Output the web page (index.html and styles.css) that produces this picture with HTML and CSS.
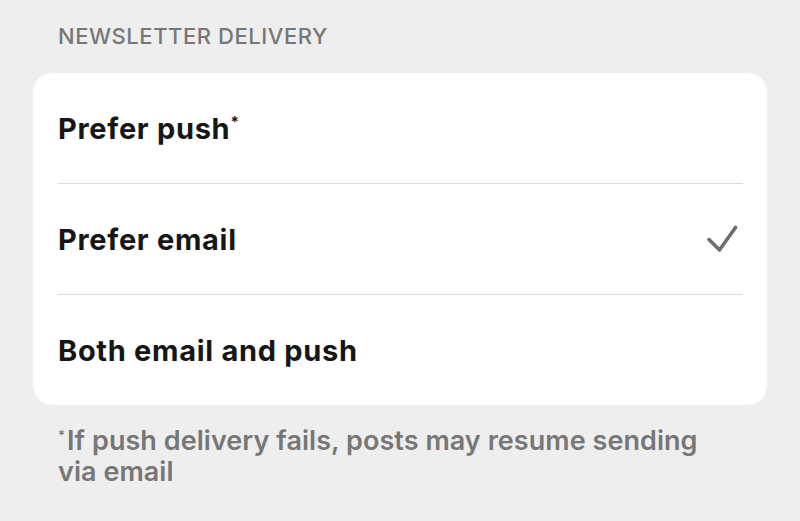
FILE: index.html
```html
<!DOCTYPE html>
<html>
<head>
<meta charset="utf-8">
<link rel="stylesheet" href="styles.css">
</head>
<body>
<div class="page">
  <div class="section-title">NEWSLETTER DELIVERY</div>
  <div class="card">
    <div class="row"><span class="label">Prefer push<span class="ast">*</span></span></div>
    <div class="sep"></div>
    <div class="row"><span class="label">Prefer email</span>
      <svg class="check" width="32" height="30" viewBox="0 0 32 30"><path d="M3 15.5 L13.5 26 L29.5 3.5" fill="none" stroke="#6e6e6e" stroke-width="3.6" stroke-linecap="round" stroke-linejoin="round"/></svg>
    </div>
    <div class="sep"></div>
    <div class="row"><span class="label">Both email and push</span></div>
  </div>
  <div class="footnote"><span class="fast">*</span>If push delivery fails, posts may resume sending via email</div>
</div>
</body>
</html>
```
FILE: styles.css
```css
html, body { margin: 0; padding: 0; }
body { background: #eeeeee; font-family: Inter, "Noto Sans", sans-serif; }
.page { padding: 22px 33px 0 33px; width: 734px; }
.section-title { color: #777777; font-size: 22px; font-weight: 500; letter-spacing: 0.55px; padding-left: 25px; height: 51px; line-height: 28px; }
.card { background: #ffffff; border-radius: 20px; padding-left: 25px; }
.row { height: 110px; display: flex; align-items: center; justify-content: space-between; padding-right: 29px; }
.label { font-size: 29px; font-weight: 700; color: #161616; letter-spacing: 0.7px; }
.ast { font-size: 15px; line-height: 1; vertical-align: 12px; }
.sep { height: 1px; background: #dadada; margin-right: 24px; }
.check { display: block; }
.footnote { color: #777777; font-size: 27px; font-weight: 600; line-height: 31px; padding: 20px 50px 0 25px; letter-spacing: 0.05px; }
.fast { display: inline-block; font-size: 13px; line-height: 13px; vertical-align: 10px; margin-right: 2px; }
```
